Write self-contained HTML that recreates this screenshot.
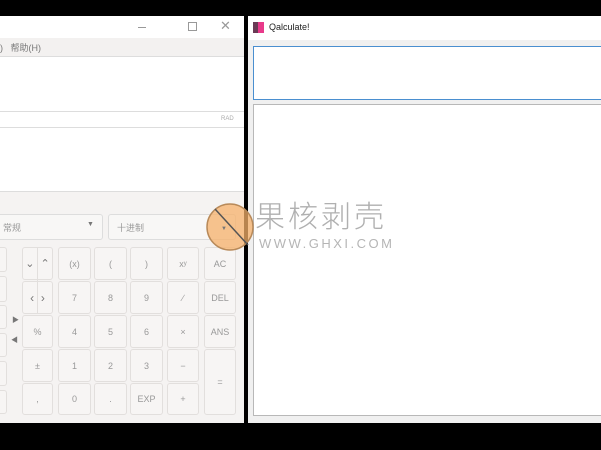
<!DOCTYPE html>
<html><head><meta charset="utf-8"><style>
*{margin:0;padding:0;box-sizing:border-box}
body{width:601px;height:450px;background:#000;position:relative;overflow:hidden;font-family:"Liberation Sans","Noto Sans CJK SC",sans-serif;color:#888}
.a{position:absolute}
.btn{position:absolute;border:1px solid #e2dfdd;border-radius:3px;background:#f7f5f4;font-size:9px;color:#999;display:flex;align-items:center;justify-content:center}
</style></head><body>
<!-- left window -->
<div class="a" style="left:0;top:16px;width:244px;height:407px;background:#f5f3f2">
 <div class="a" style="left:0;top:0;width:244px;height:22px;background:#fff"></div>
 <div class="a" style="left:138px;top:11px;width:8px;height:1px;background:#999"></div>
 <div class="a" style="left:188px;top:6px;width:9px;height:9px;border:1px solid #999"></div>
 <div class="a" style="left:220px;top:2px;font-size:13px;color:#999">✕</div>
 <div class="a" style="left:0;top:22px;width:244px;height:19px;background:#f3f1f0;border-bottom:1px solid #ddd"></div>
 <div class="a" style="left:0;top:25px;font-size:9px;color:#777">)&nbsp;&nbsp;&nbsp;帮助(H)</div>
 <div class="a" style="left:0;top:41px;width:244px;height:55px;background:#fff;border-bottom:1px solid #ddd"></div>
 <div class="a" style="left:0;top:96px;width:244px;height:16px;background:#fff;border-bottom:1px solid #ddd"></div>
 <div class="a" style="left:221px;top:100px;font-size:6px;color:#aaa">RAD</div>
 <div class="a" style="left:0;top:112px;width:244px;height:64px;background:#fff;border-bottom:1px solid #ddd"></div>
 <div class="a" style="left:-4px;top:198px;width:107px;height:26px;border:1px solid #ddd;border-radius:3px;background:#f8f7f6"></div>
 <div class="a" style="left:3px;top:205px;font-size:9px;color:#999">常规</div>
 <div class="a" style="left:87px;top:205px;font-size:7px;color:#777">▼</div>
 <div class="a" style="left:108px;top:198px;width:128px;height:26px;border:1px solid #ddd;border-radius:3px;background:#f8f7f6"></div>
 <div class="a" style="left:117px;top:205px;font-size:9px;color:#999">十进制</div>
</div>
<div class="btn" style="left:-3px;top:247px;width:10px;height:25px"></div>
<div class="btn" style="left:-3px;top:276px;width:10px;height:26px"></div>
<div class="btn" style="left:-3px;top:305px;width:10px;height:24px"></div>
<div class="btn" style="left:-3px;top:333px;width:10px;height:24px"></div>
<div class="btn" style="left:-3px;top:361px;width:10px;height:25px"></div>
<div class="btn" style="left:-3px;top:390px;width:10px;height:24px"></div>
<div class="a" style="left:12px;top:315px;font-size:7px;color:#777">▶</div>
<div class="a" style="left:11px;top:335px;font-size:7px;color:#777">◀</div>
<div class="btn" style="left:22px;top:247px;width:31px;height:33px;font-size:11px;color:#777">⌄&nbsp;&nbsp;⌃</div>
<div class="btn" style="left:22px;top:281px;width:31px;height:33px;font-size:12px;color:#777">‹&nbsp;&nbsp;›</div>
<div class="a" style="left:37px;top:248px;width:1px;height:65px;background:#e2dfdd"></div>
<div class="btn" style="left:22px;top:315px;width:31px;height:33px">%</div>
<div class="btn" style="left:22px;top:349px;width:31px;height:33px">±</div>
<div class="btn" style="left:22px;top:383px;width:31px;height:32px">,</div>
<div class="btn" style="left:58px;top:247px;width:33px;height:33px">(x)</div>
<div class="btn" style="left:94px;top:247px;width:33px;height:33px">(</div>
<div class="btn" style="left:130px;top:247px;width:33px;height:33px">)</div>
<div class="btn" style="left:167px;top:247px;width:32px;height:33px">x<sup style="font-size:6px">y</sup></div>
<div class="btn" style="left:204px;top:247px;width:32px;height:33px">AC</div>
<div class="btn" style="left:58px;top:281px;width:33px;height:33px">7</div>
<div class="btn" style="left:94px;top:281px;width:33px;height:33px">8</div>
<div class="btn" style="left:130px;top:281px;width:33px;height:33px">9</div>
<div class="btn" style="left:167px;top:281px;width:32px;height:33px">∕</div>
<div class="btn" style="left:204px;top:281px;width:32px;height:33px">DEL</div>
<div class="btn" style="left:58px;top:315px;width:33px;height:33px">4</div>
<div class="btn" style="left:94px;top:315px;width:33px;height:33px">5</div>
<div class="btn" style="left:130px;top:315px;width:33px;height:33px">6</div>
<div class="btn" style="left:167px;top:315px;width:32px;height:33px">×</div>
<div class="btn" style="left:204px;top:315px;width:32px;height:33px">ANS</div>
<div class="btn" style="left:58px;top:349px;width:33px;height:33px">1</div>
<div class="btn" style="left:94px;top:349px;width:33px;height:33px">2</div>
<div class="btn" style="left:130px;top:349px;width:33px;height:33px">3</div>
<div class="btn" style="left:167px;top:349px;width:32px;height:33px">−</div>
<div class="btn" style="left:204px;top:349px;width:32px;height:66px">=</div>
<div class="btn" style="left:58px;top:383px;width:33px;height:32px">0</div>
<div class="btn" style="left:94px;top:383px;width:33px;height:32px">.</div>
<div class="btn" style="left:130px;top:383px;width:33px;height:32px">EXP</div>
<div class="btn" style="left:167px;top:383px;width:32px;height:32px">+</div>
<!-- right window -->
<div class="a" style="left:248px;top:16px;width:353px;height:407px;background:#f0f0f0">
 <div class="a" style="left:0;top:0;width:353px;height:24px;background:#fff"></div>
 <div class="a" style="left:5px;top:6px;width:5px;height:11px;background:#6a3a55"></div>
 <div class="a" style="left:10px;top:6px;width:6px;height:11px;background:#e8398a"></div>
 <div class="a" style="left:21px;top:6px;font-size:9px;color:#222">Qalculate!</div>
 <div class="a" style="left:5px;top:30px;width:360px;height:54px;background:#fff;border:1px solid #4a8fd0"></div>
 <div class="a" style="left:5px;top:88px;width:360px;height:312px;background:#fff;border:1px solid #b8b8b8"></div>
</div>
<!-- watermark -->
<svg class="a" style="left:204px;top:201px" width="52" height="52"><circle cx="26" cy="26" r="23" fill="#f5b06a" fill-opacity="0.75" stroke="#b88a5a" stroke-width="1.5"/><line x1="11" y1="8" x2="44" y2="44" stroke="#555" stroke-width="1.5"/><text x="17" y="29" font-size="6" fill="#777">▼</text></svg>
<div class="a" style="left:255px;top:200px;font-size:30px;color:#b0b0b0;letter-spacing:3px;line-height:36px;font-weight:300">果核剥壳</div>
<div class="a" style="left:259px;top:236px;font-size:13px;color:#b5b5b5;letter-spacing:2.5px">WWW.GHXI.COM</div>
</body></html>
